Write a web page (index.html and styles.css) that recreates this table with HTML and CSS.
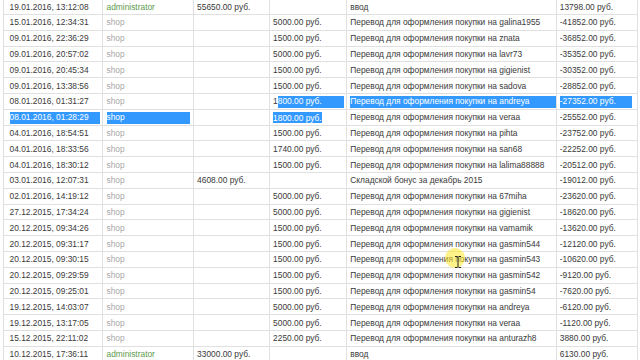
FILE: index.html
```html
<!DOCTYPE html>
<html>
<head>
<meta charset="utf-8">
<link rel="stylesheet" href="styles.css">
</head>
<body>
<div class="page">
<table class="log">
<colgroup><col class="c1"><col class="c2"><col class="c3"><col class="c4"><col class="c5"><col class="c6"></colgroup>
<tbody>
<tr><td class="d">19.01.2016, 13:12:08</td><td class="u adm">administrator</td><td>55650.00 руб.</td><td></td><td>ввод</td><td>13798.00 руб.</td></tr>
<tr><td class="d">15.01.2016, 12:34:31</td><td class="u">shop</td><td></td><td>5000.00 руб.</td><td>Перевод для оформления покупки на galina1955</td><td>-41852.00 руб.</td></tr>
<tr><td class="d">09.01.2016, 22:36:29</td><td class="u">shop</td><td></td><td>1500.00 руб.</td><td>Перевод для оформления покупки на znata</td><td>-36852.00 руб.</td></tr>
<tr><td class="d">09.01.2016, 20:57:02</td><td class="u">shop</td><td></td><td>5000.00 руб.</td><td>Перевод для оформления покупки на lavr73</td><td>-35352.00 руб.</td></tr>
<tr><td class="d">09.01.2016, 20:45:34</td><td class="u">shop</td><td></td><td>1500.00 руб.</td><td>Перевод для оформления покупки на gigienist</td><td>-30352.00 руб.</td></tr>
<tr><td class="d">09.01.2016, 13:38:56</td><td class="u">shop</td><td></td><td>1500.00 руб.</td><td>Перевод для оформления покупки на sadova</td><td>-28852.00 руб.</td></tr>
<tr><td class="d">08.01.2016, 01:31:27</td><td class="u">shop</td><td></td><td class="split"><span class="pre">1</span><span class="sel grow">800.00 руб.</span></td><td class="full"><span class="sel blk">Перевод для оформления покупки на andreya</span></td><td class="full6"><span class="sel blk">-27352.00 руб.</span></td></tr>
<tr><td class="d full1"><span class="sel blk">08.01.2016, 01:28:29</span></td><td class="u full2"><span class="sel blk">shop</span></td><td></td><td><span class="sel">1800.00 руб.</span></td><td>Перевод для оформления покупки на veraa</td><td>-25552.00 руб.</td></tr>
<tr><td class="d">04.01.2016, 18:54:51</td><td class="u">shop</td><td></td><td>1500.00 руб.</td><td>Перевод для оформления покупки на pihta</td><td>-23752.00 руб.</td></tr>
<tr><td class="d">04.01.2016, 18:33:56</td><td class="u">shop</td><td></td><td>1740.00 руб.</td><td>Перевод для оформления покупки на san68</td><td>-22252.00 руб.</td></tr>
<tr><td class="d">04.01.2016, 18:30:12</td><td class="u">shop</td><td></td><td>1500.00 руб.</td><td>Перевод для оформления покупки на lalima88888</td><td>-20512.00 руб.</td></tr>
<tr><td class="d">03.01.2016, 12:07:31</td><td class="u">shop</td><td>4608.00 руб.</td><td></td><td>Складской бонус за декабрь 2015</td><td>-19012.00 руб.</td></tr>
<tr><td class="d">02.01.2016, 14:19:12</td><td class="u">shop</td><td></td><td>5000.00 руб.</td><td>Перевод для оформления покупки на 67miha</td><td>-23620.00 руб.</td></tr>
<tr><td class="d">27.12.2015, 17:34:24</td><td class="u">shop</td><td></td><td>5000.00 руб.</td><td>Перевод для оформления покупки на gigienist</td><td>-18620.00 руб.</td></tr>
<tr><td class="d">20.12.2015, 09:34:26</td><td class="u">shop</td><td></td><td>1500.00 руб.</td><td>Перевод для оформления покупки на vamamik</td><td>-13620.00 руб.</td></tr>
<tr><td class="d">20.12.2015, 09:31:17</td><td class="u">shop</td><td></td><td>1500.00 руб.</td><td>Перевод для оформления покупки на gasmin544</td><td>-12120.00 руб.</td></tr>
<tr><td class="d">20.12.2015, 09:30:15</td><td class="u">shop</td><td></td><td>1500.00 руб.</td><td>Перевод для оформления покупки на gasmin543</td><td>-10620.00 руб.</td></tr>
<tr><td class="d">20.12.2015, 09:29:59</td><td class="u">shop</td><td></td><td>1500.00 руб.</td><td>Перевод для оформления покупки на gasmin542</td><td>-9120.00 руб.</td></tr>
<tr><td class="d">20.12.2015, 09:25:01</td><td class="u">shop</td><td></td><td>1500.00 руб.</td><td>Перевод для оформления покупки на gasmin54</td><td>-7620.00 руб.</td></tr>
<tr><td class="d">19.12.2015, 14:03:07</td><td class="u">shop</td><td></td><td>5000.00 руб.</td><td>Перевод для оформления покупки на andreya</td><td>-6120.00 руб.</td></tr>
<tr><td class="d">19.12.2015, 13:17:05</td><td class="u">shop</td><td></td><td>5000.00 руб.</td><td>Перевод для оформления покупки на veraa</td><td>-1120.00 руб.</td></tr>
<tr><td class="d">15.12.2015, 22:11:02</td><td class="u">shop</td><td></td><td>2250.00 руб.</td><td>Перевод для оформления покупки на anturazh8</td><td>3880.00 руб.</td></tr>
<tr><td class="d">10.12.2015, 17:36:11</td><td class="u adm">administrator</td><td>33000.00 руб.</td><td></td><td>ввод</td><td>6130.00 руб.</td></tr>
</tbody>
</table>
<div class="pointer">
<svg class="ibeam" width="8" height="12" viewBox="0 0 8 12"><path d="M1 0.5h2.2l0.8 0.8 0.8-0.8H7M4 1.3v9.4M1 11.5h2.2l0.8-0.8 0.8 0.8H7" fill="none" stroke="#222" stroke-width="1"/></svg>
</div>
</div>
</body>
</html>
```

FILE: styles.css
```css
html, body {
  margin: 0;
  padding: 0;
  background: #ffffff;
  overflow: hidden;
}
.page {
  position: relative;
  width: 640px;
  height: 360px;
  overflow: hidden;
}
.log {
  margin: -1.8px 0 0 3px;
  width: 634px;
  table-layout: fixed;
  border-collapse: collapse;
  font-family: "Liberation Sans", Arial, sans-serif;
  font-size: 8.4px;
  color: #3a3a3a;
}
.c1 { width: 98.5px; }
.c2 { width: 91.6px; }
.c3 { width: 76px; }
.c4 { width: 77.2px; }
.c5 { width: 209.5px; }
.c6 { width: 81.2px; }
.log td {
  height: 15.81px;
  box-sizing: border-box;
  border: 1px solid #e0e0e0;
  padding: 1px 0 0 3px;
  white-space: nowrap;
  overflow: hidden;
  line-height: 11px;
}
.log td.d { padding-left: 5.5px; }
.log td.u { padding-left: 4px; color: #a8a8a8; }
.log td.adm { color: #5e9a4e; }
.sel {
  background: #3399ff;
  color: #ffffff;
  padding: 0.5px 0;
}
.blk { display: block; }
.split .pre { display: inline-block; }
.split .grow {
  display: inline-block;
  width: 66px;
}
.full1 .blk { margin-right: 2px; }
.full2 .blk { margin-right: 3px; }
.full6 .blk { margin-right: 5px; }
.pointer {
  position: absolute;
  left: 445px;
  top: 248px;
  width: 20px;
  height: 20px;
  border-radius: 50%;
  background: rgba(255, 232, 40, 0.55);
}
.ibeam {
  position: absolute;
  left: 9px;
  top: 8px;
}
```
